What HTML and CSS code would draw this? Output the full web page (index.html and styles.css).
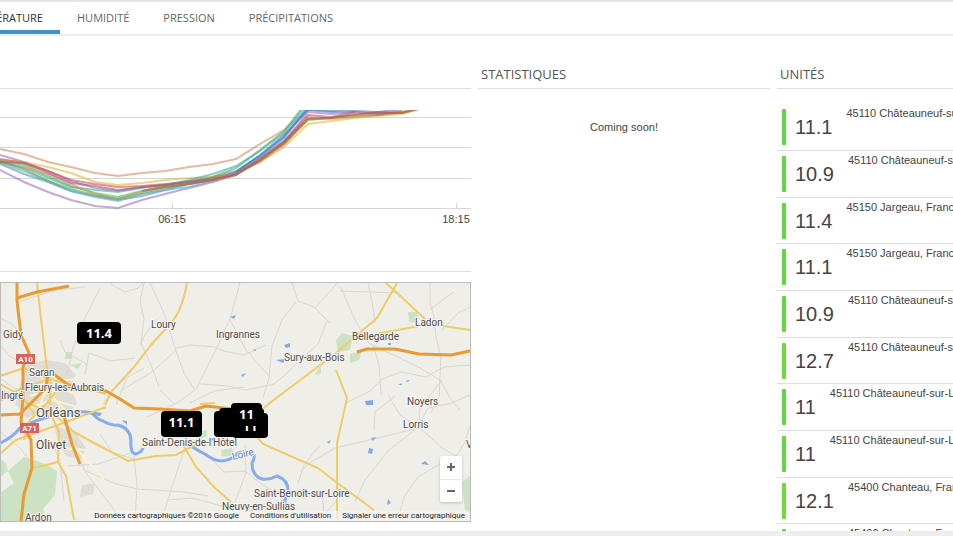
FILE: index.html
```html
<!DOCTYPE html>
<html lang="fr">
<head>
<meta charset="utf-8">
<title>Température</title>
<link rel="stylesheet" href="styles.css">
</head>
<body>
<nav class="tabs">
  <a class="tab active" href="#temperature">TEMPÉRATURE</a>
  <a class="tab" href="#humidite">HUMIDITÉ</a>
  <a class="tab" href="#pression">PRESSION</a>
  <a class="tab" href="#precipitations">PRÉCIPITATIONS</a>
</nav>
<main class="board">
  <section class="col">
    <div class="head"></div>
    <svg class="chart" viewBox="0 89 471 137">
      <defs><clipPath id="plot"><rect x="0" y="110" width="471" height="99"/></clipPath></defs>
      <path class="grid" d="M0 117.500H471M0 147.500H471M0 178.500H471M0 208.500H471M172.500 203V208M456.500 203V208"/>
      <g class="series" clip-path="url(#plot)">
        <polyline stroke="#d98b5f" points="0,149 24,154 48,162 71,167 95,173 118,176 142,173 165,171 189,167 213,164 236,159 260,144 284,130 308,109"/>
        <polyline stroke="#a06cc8" points="0,170 24,182 48,192 71,200 95,206 118,208 142,200 165,194 189,188 213,182 236,175 260,160 284,142 308,112 331,114 355,112"/>
        <polyline stroke="#9470c4" points="0,155 24,162 48,171 71,181 95,188 118,191 142,187 165,185 189,181 213,177 236,171 260,156 284,137 308,109"/>
        <polyline stroke="#e6b830" points="0,160 24,162 48,167 71,173 95,182 118,185 142,183 165,180 189,178 213,177 236,173 260,162 284,147 308,124 331,121 355,118 378,116 402,114 418,109"/>
        <polyline stroke="#c94f63" points="0,159 24,163 48,171 71,180 95,184 118,187 142,186 165,184 189,182 213,178 236,173 260,158 284,141 308,118 331,118 355,115 378,112 402,113 418,109"/>
        <polyline stroke="#4fae68" points="0,161 24,165 48,176 71,186 95,193 118,197 142,191 165,186 189,183 213,177 236,168 260,150 284,131 302,108"/>
        <polyline stroke="#35b4a0" points="0,163 24,167 48,178 71,187 95,190 118,192 142,188 165,185 189,180 213,174 236,166 260,151 284,133 304,108"/>
        <polyline stroke="#3d9bc4" points="0,164 24,174 48,182 71,191 95,196 118,200 142,196 165,190 189,184 213,180 236,172 260,156 284,137 306,109 331,111 355,109"/>
        <polyline stroke="#52b0cc" points="0,163 24,171 48,181 71,191 95,197 118,201 142,194 165,190 189,187 213,181 236,173 260,157 284,139 307,108"/>
        <polyline stroke="#d9a15c" points="0,162 24,168 48,174 71,184 95,194 118,199 142,191 165,187 189,184 213,179 236,174 260,162 284,145 308,117 331,119 355,117 378,115 402,113 418,109"/>
        <polyline stroke="#7d9b48" points="0,161 24,169 48,181 71,189 95,195 118,199 142,193 165,188 189,184 213,180 236,174 260,160 284,144 308,120 331,118 355,116 378,115 402,112 412,109"/>
        <polyline stroke="#b8516b" points="0,162 24,163 48,173 71,183 95,186 118,190 142,187 165,185 189,182 213,179 236,175 260,159 284,142 308,115 331,117 355,112 378,114 402,111"/>
        <polyline stroke="#4278b8" points="236,172 260,155 284,135 308,110 331,112 355,111 378,112 402,109"/>
        <polyline stroke="#bd5b4b" points="142,191 165,187 189,184 213,180 236,174 260,161 284,143 308,119 331,118 355,114 378,113 402,113 418,109"/>
      </g>
      <text x="172" y="223" text-anchor="middle">06:15</text>
      <text x="456" y="223" text-anchor="middle">18:15</text>
    </svg>
    <div class="head low"></div>
    <div class="map">
      <svg class="canvas" viewBox="1 283 469 238" preserveAspectRatio="xMinYMin slice">
        <g fill="#cbe2c3">
          <path d="M8 471l16-14 22 7 11 7-2 24-12 14 4 14H0v-30l14-10zM0 459l6 4 2 8-8 6z"/>
          <path d="M336 340l6-7 11 3-3 14-12 2zM350 354l12-3-3 9-9 3zM408 312l9 0 1 11-9-1zM317 370l4-4v8l-6 1zM201 432l6-2 0 6-8 3zM221 450l11-2 2 7-12 2zM462 482l8-6v38l-5-4zM70 365l12-2-4 6zM66 352h6v7h-7z"/>
        </g>
        <path fill="#dfddd6" d="M27 365l18-5 20 3 11 12-6 12 7 16-9 12-20-5-22 8-11-14 5-18zM54 425l22 8 10 15-6 12-14-4-8-14zM82 485l13-2-2 11-13 3z"/>
        <g class="minor">
          <path d="M100 288l-15 30-12 30-6 26M85 375l4-22 22 8 24-3M111 284l14 8 13-4 5-5M144 283l-4 18 4 18-3 24 10 22 8 22M20 302l10-4 26-8 30-3M0 318l12 6 10 12M140 345l6-12 11-14M0 345l8 10 20 12M150 283l14 30 12 38 8 22 11 17-18 13-30 14M176 350l-24 22-30 18M240 283l-10 36-14 30-20 40M176 348l14-3 24 2 10 4 20 4 22-10M230 320l16 30 23 26M292 283l6 18 16 6 16 16M296 302l-14 18-10 26-3 32-6 20M200 384l28 2 18 4 28-6 12-10 12-12 20-18 9-23M316 307l18-20 3-4M340 286l16 36 14 22M340 291l60 2M368 283l4 18 3 22M430 283v20l4 14 2 20 5 20-2 40-8 16M430 310l12-10 12-8M470 307l-12 6-16 17M373 345l6 20 2 30M370 344l30 14 20 10 20 12 10 18 10 12M470 365l-26 2-18 10-24-5-20 7-12 12-24 12M442 380l-22 28-1 18M388 395l12 20 20 13 22 20 14 8 8-12 6-18M470 395l-18 8-24 5-11 20-22 6-60 14-24 14-11 10M417 428l-28 22-24 30-10 22M456 455l-18 10-20 12-14 20-4 15M374 430l1-18 20-16"/>
          <path d="M76 440l8 30 32 14 22 5 46 3 24 4M84 470l18 24 20 26M134 456l3 30-2 34M184 450l-20 62M168 500l24-2 30 8 44 6M245 445l1 28-16 42M208 455l16 17 21-1 18 14 16 10M320 445l-16 20-6 18M0 432l20 16 14 18M100 434l12 18 24 8M68 466l30-2 36-12M0 505l14-12 8-18M0 378l14 10 20 6M190 403l24-12 30-4M102 405l16-22 26-15M160 390l14 14M322 490l2 25 12-14M60 340l5 12 23 13M50 437l10 24 4 40M126 380l-10 25M38 438l16 10 18-5 12 6"/>
        </g>
        <path class="lane" d="M33 370l18 12 24-3M30 396l30-8 20 8M40 372l6 18-8 20M56 376l-4 20 14 16M28 384l20 4 18-6M30 408l22-8 22 6M64 420l8 24 24 26 8 10M46 436l18 12 22 2"/>
        <path class="river" d="M0 443Q12 438 20 428Q34 420 60 414Q80 410 92 413Q98 420 103 421Q112 426 118 425Q130 428 131 440Q130 454 136 454Q142 452 143 448M186 442Q196 450 205 454Q214 461 222 461Q232 460 238 453Q246 450 253 453Q256 456 252 463Q252 476 262 479Q270 480 277 476Q288 480 288 490Q286 500 282 506"/>
        <path fill="#7eaaf0" d="M88 411l14 2-2 3-12-2zM230 317l6-2-2 4zM241 375l5-2-3 4zM284 345l6-2 0 4-4 1zM276 360l10-1-3 4zM252 350l4-1v2zM365 401l8-1 0 5-7 0zM371 438l5-1-3 4zM369 448l4 1-1 5-4-1zM421 464l4-3 4 4-7-1zM388 499l3 4-4 2zM327 442l4-2-2 4zM398 385l4-2v2zM405 381l5-1-2 2zM388 343h3v2h-3zM122 420l5 1v4zM281 500l6 2-4 6z"/>
        <path class="yellow" d="M37 283l4 36 6 50 4 14-1 22M187 283q-5 28-16 40l-20 22-17 22-22 24-7 14M0 376l24-8 24 11 30 7 28 8M0 401l20-12 30-10M0 454l16-14 28-10 30-11 32-12M0 390l30 14 24 10 20 18 22 12 32 17 28-5 20-1 28-15M182 443l14 24 18 20 17 15M0 384l22 12 12 18M34 468l24-6 8 14 8 44M58 462l1-30-10-22M253 417l18-15 40-30 24-18 42-36 20-35M386 283l24 22 15 14M376 334l54-10 40 6M336 370l11 28-10 45v75M253 432l10 12 55 24 18 14 38 28M200 404l15-1M24 440l6-20 18-18 10-14"/>
        <path class="orange" d="M17 283v18l4 34 8 18-6 14 0 30-2 25 10 18 1 28-8 26-3 27M17 298l20-6 32-6M0 415l20-1 10-10 16-16 2-14M52 373l22 16 32 2 14 8 14 9 26 1 30 2 16-5 26 3M64 416l8 28 8 20M357 352l10-3 28 0 24 5 32 1 19-4"/>
        <g class="shield"><rect x="16" y="354" width="19" height="10"/><rect x="20" y="423" width="19" height="10"/></g>
        <g class="route"><text x="25.500" y="362">A10</text><text x="29.500" y="431">A71</text></g>
        <g class="places">
          <text x="3" y="338">Gidy</text><text x="151" y="328">Loury</text><text x="216" y="338">Ingrannes</text>
          <text x="415" y="326">Ladon</text><text x="352" y="340">Bellegarde</text><text x="284" y="361">Sury-aux-Bois</text>
          <text x="29" y="376">Saran</text><text x="25" y="391">Fleury-les-Aubrais</text><text x="1" y="399">Ingré</text>
          <text x="407" y="405">Noyers</text><text x="403" y="428">Lorris</text><text x="466" y="448">V</text>
          <text class="city" x="36" y="417">Orléans</text><text class="town" x="36" y="449">Olivet</text>
          <text x="142" y="446">Saint-Denis-de-l'Hôtel</text><text x="254" y="497">Saint-Benoît-sur-Loire</text>
          <text x="222" y="510">Neuvy-en-Sullias</text><text x="25" y="521">Ardon</text>
          <text class="water" transform="translate(233 460) rotate(-14)">Loire</text>
        </g>
      </svg>
      <span class="pin p1">11.4</span>
      <span class="pin p2">11.1</span>
      <span class="pin p3"></span>
      <span class="pin p4"></span>
      <span class="pin p5">11</span>
      <span class="pin p6">11</span>
      <div class="zoom">
        <button type="button" aria-label="Zoom avant"><svg viewBox="0 0 10 10"><path d="M5 1V9M1 5H9"/></svg></button>
        <button type="button" aria-label="Zoom arrière"><svg viewBox="0 0 10 10"><path d="M1 5H9"/></svg></button>
      </div>
      <div class="credits"><span>Données cartographiques ©2016 Google</span><a href="#conditions">Conditions d'utilisation</a><a href="#erreur">Signaler une erreur cartographique</a></div>
    </div>
  </section>
  <section class="col">
    <h2 class="head">STATISTIQUES</h2>
    <p class="soon">Coming soon!</p>
  </section>
  <section class="col">
    <h2 class="head">UNITÉS</h2>
    <ul class="units">
      <li><b>11.1</b><span>45110 Châteauneuf-sur-Loire, France</span></li>
      <li><b>10.9</b><span>45110 Châteauneuf-sur-Loire, France</span></li>
      <li><b>11.4</b><span>45150 Jargeau, France</span></li>
      <li><b>11.1</b><span>45150 Jargeau, France</span></li>
      <li><b>10.9</b><span>45110 Châteauneuf-sur-Loire, France</span></li>
      <li class="warm"><b>12.7</b><span>45110 Châteauneuf-sur-Loire, France</span></li>
      <li><b>11</b><span>45110 Châteauneuf-sur-Loire, France</span></li>
      <li><b>11</b><span>45110 Châteauneuf-sur-Loire, France</span></li>
      <li class="warm"><b>12.1</b><span>45400 Chanteau, France</span></li>
      <li><b>12.1</b><span>45400 Chanteau, France</span></li>
    </ul>
  </section>
</main>
<footer class="foot"></footer>
</body>
</html>
```
FILE: styles.css
```css
* { box-sizing: border-box; }
body {
  margin: 0;
  height: 100vh;
  display: flex;
  flex-direction: column;
  overflow: hidden;
  background: #fff;
  color: #444;
  font: 11px/18px "Liberation Sans", Arial, sans-serif;
}
.tabs {
  flex: none;
  display: flex;
  height: 36px;
  border-top: 2px solid #e6e6e6;
  border-bottom: 2px solid #eee;
}
.tab {
  padding: 0 17px;
  color: #666;
  font: 11px/32px "Open Sans", sans-serif;
  text-decoration: none;
}
.tab.active {
  display: flex;
  justify-content: flex-end;
  width: 60px;
  overflow: hidden;
  color: #333;
  border-bottom: 4px solid #428fca;
}
.board {
  flex: 1;
  min-height: 0;
  overflow: hidden;
  display: grid;
  grid-template-columns: 471fr 292fr 176fr;
  gap: 7px;
}
.col { min-width: 0; }
.head {
  height: 53px;
  margin: 0;
  padding: 29px 3px 0;
  border-bottom: 1px solid #ddd;
  color: #555;
  font: 13px/18px "Open Sans", sans-serif;
}
.head.low { height: 46px; }
.chart { display: block; width: 100%; }
.chart text { font-size: 11px; fill: #444; }
.grid { stroke: #d6d6d6; fill: none; }
.series { fill: none; stroke-width: 2; }
.series polyline { opacity: 0.6; }
.map {
  position: relative;
  height: 240px;
  margin-top: 10px;
  border: 1px solid #bbb;
  background: #efeee9;
  overflow: hidden;
}
.canvas { display: block; width: 100%; height: 100%; }
.minor { fill: none; stroke: #dad7d2; stroke-width: 1; }
.lane { fill: none; stroke: #fbf3d0; stroke-width: 2; }
.river { fill: none; stroke: #86adf0; stroke-width: 3; }
.yellow { fill: none; stroke: #f0cc66; stroke-width: 2; }
.orange { fill: none; stroke: #e99a32; stroke-width: 3; stroke-linejoin: round; }
.shield { fill: #d9605c; }
.route { fill: #fff; font: bold 8px Roboto, sans-serif; text-anchor: middle; }
.places {
  font: 10px Roboto, sans-serif;
  fill: #4c4c4c;
  stroke: #f6f5f1;
  stroke-width: 2px;
  paint-order: stroke;
}
.city { font-size: 13px; }
.town { font-size: 12px; }
.water { fill: #5c7fc0; }
.pin {
  position: absolute;
  height: 26px;
  border-radius: 4px;
  background: #000;
  color: #fff;
  font: bold 13px/22px "Open Sans", sans-serif;
  text-align: center;
}
.p1 { left: 76px; top: 39px; width: 44px; height: 22px; }
.p2 { left: 160px; top: 128px; width: 41px; }
.p3 { left: 213px; top: 128px; width: 40px; }
.p4 { left: 218px; top: 125px; width: 45px; }
.p5 { left: 231px; top: 130px; width: 36px; height: 25px; line-height: 27px; }
.p6 { left: 230px; top: 120px; width: 31px; height: 23px; }
.zoom {
  position: absolute;
  right: 8px;
  bottom: 19px;
  width: 22px;
  display: flex;
  flex-direction: column;
  border-radius: 2px;
  background: #fff;
  box-shadow: 0 1px 3px #bbb;
}
.zoom button {
  height: 23px;
  padding: 0;
  border: 0;
  background: none;
}
.zoom button + button { border-top: 1px solid #e6e6e6; }
.zoom svg { width: 10px; height: 10px; stroke: #666; stroke-width: 2; }
.credits {
  position: absolute;
  right: 0;
  bottom: 0;
  display: flex;
  gap: 11px;
  padding: 0 5px;
  background: #f5f4f0b0;
  font: 8px/10px Roboto, sans-serif;
  white-space: nowrap;
}
.credits span, .credits a { color: #222; text-decoration: none; }
.soon {
  margin: 0;
  padding-top: 29px;
  text-align: center;
}
.units {
  margin: 15px 0 0;
  padding: 0;
  list-style: none;
  overflow: hidden;
}
.units li {
  display: flex;
  height: 47px;
  padding-left: 5px;
  border-bottom: 1px solid #ddd;
  white-space: nowrap;
}
.units li:nth-child(3n) { height: 46px; }
.units li::before {
  content: "";
  flex: none;
  width: 4px;
  height: 36px;
  margin: 5px 9px 0 0;
  border-radius: 1px;
  background: #5fd93b;
}
.units .warm::before { background: #72da36; }
.units b {
  margin-right: 14px;
  font-weight: normal;
  font-size: 20px;
  line-height: 46px;
}
.foot { flex: none; height: 5px; background: #eee; }
```
